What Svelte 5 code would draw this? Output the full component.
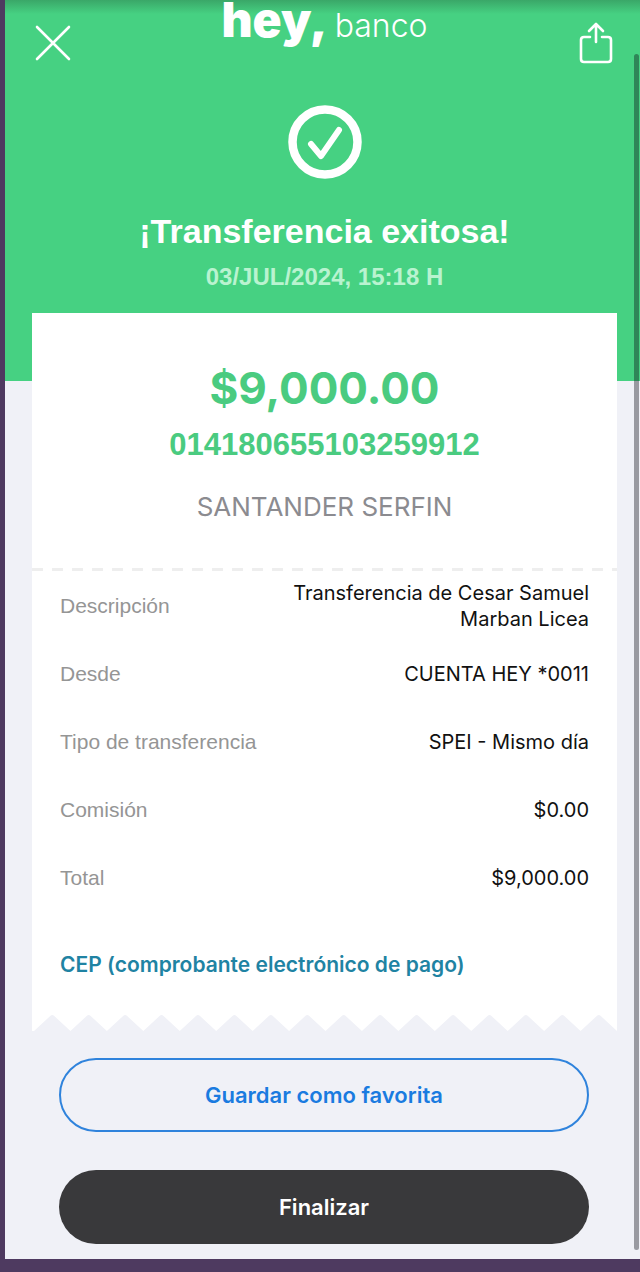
<script lang="ts">
  interface Detail {
    label: string;
    value: string;
  }

  const details: Detail[] = [
    { label: 'Descripción', value: 'Transferencia de Cesar Samuel Marban Licea' },
    { label: 'Desde', value: 'CUENTA HEY *0011' },
    { label: 'Tipo de transferencia', value: 'SPEI - Mismo día' },
    { label: 'Comisión', value: '$0.00' },
    { label: 'Total', value: '$9,000.00' }
  ];

  // torn edge of the receipt
  const teeth = 16;
  const toothWidth = 36;
  const tornEdge =
    'M0 0V16H2' +
    Array.from({ length: teeth }, (_, i) => {
      const x = 2 + i * toothWidth;
      return `L${x + 16} 1Q${x + 18} -1 ${x + 20} 1L${x + toothWidth} 16`;
    }).join('') +
    'V0Z';
</script>

<main class="screen">
  <header class="header">
    <div class="topbar">
      <button class="icon-button" type="button" aria-label="Cerrar">
        <svg width="40" height="40" viewBox="0 0 40 40">
          <path d="M4 4L36 36M36 4L4 36" />
        </svg>
      </button>
      <div class="logo">
        <span class="hey">hey,</span>
        <span class="banco">banco</span>
      </div>
      <button class="icon-button" type="button" aria-label="Compartir">
        <svg width="40" height="44" viewBox="0 0 40 44">
          <path d="M14 16H8Q5 16 5 19V38Q5 41 8 41H32Q35 41 35 38V19Q35 16 32 16H26M20 21V3M13 10L20 3L27 10" />
        </svg>
      </button>
    </div>
    <svg class="check" width="74" height="74" viewBox="0 0 74 74">
      <circle cx="37" cy="37" r="32.5" stroke-width="8.5" />
      <path d="M23 39L33 51L51 25" stroke-width="6" />
    </svg>
    <h1>¡Transferencia exitosa!</h1>
    <p class="date">03/JUL/2024, 15:18 H</p>
  </header>

  <section class="receipt">
    <div class="summary">
      <p class="amount">$9,000.00</p>
      <p class="account">014180655103259912</p>
      <p class="bank">SANTANDER SERFIN</p>
    </div>
    <div class="divider"></div>
    <dl class="details">
      {#each details as detail}
        <div class="row">
          <dt>{detail.label}</dt>
          <dd>{detail.value}</dd>
        </div>
      {/each}
    </dl>
    <a class="cep" href="#cep">CEP (comprobante electrónico de pago)</a>
  </section>
  <svg class="torn" viewBox="0 0 578 16" preserveAspectRatio="none" aria-hidden="true">
    <path d={tornEdge} />
  </svg>

  <div class="actions">
    <button class="button outline" type="button">Guardar como favorita</button>
    <button class="button dark" type="button">Finalizar</button>
  </div>
  <div class="scrollbar"></div>
</main>

<style>
  :global(body) {
    background: #4e3a60;
  }

  .screen {
    position: relative;
    display: flex;
    flex-direction: column;
    margin: 0 0 13px 5px;
    background: #f0f1f7;
    font-family: Inter, 'Liberation Sans', sans-serif;
  }

  .header {
    display: flex;
    flex-direction: column;
    align-items: center;
    padding: 0 23px 89px 27px;
    background: linear-gradient(#3aa768, #46d182 14px);
    color: #fff;
    text-align: center;
  }

  .topbar {
    display: flex;
    justify-content: space-between;
    align-items: flex-end;
    align-self: stretch;
    height: 65px;
    padding: 0 1px;
  }

  .icon-button {
    display: flex;
    align-items: center;
    height: 44px;
    padding: 0;
    border: 0;
    background: none;
    cursor: pointer;
  }

  .icon-button svg {
    fill: none;
    stroke: #fff;
    stroke-width: 2.6;
    stroke-linecap: round;
    stroke-linejoin: round;
  }

  .logo {
    display: flex;
    align-self: flex-start;
    align-items: baseline;
    gap: 7px;
    line-height: 40px;
  }

  .hey {
    font-size: 48px;
    font-weight: 900;
  }

  .banco {
    font-size: 32px;
    font-weight: 300;
  }

  .check {
    margin-top: 40px;
    fill: none;
    stroke: #fff;
    stroke-linecap: round;
    stroke-linejoin: round;
  }

  h1,
  p,
  dl,
  dd {
    margin: 0;
  }

  h1 {
    margin-top: 32px;
    font: bold 34px/40px 'Liberation Sans', Arial, sans-serif;
  }

  .date {
    margin-top: 11px;
    color: #b9f3d0;
    font: bold 24px/30px 'Liberation Sans', Arial, sans-serif;
  }

  .receipt {
    margin: -68px 23px 0 27px;
    background: #fff;
  }

  .summary {
    display: flex;
    flex-direction: column;
    align-items: center;
    padding: 47px 28px 45px;
    color: #4acb80;
  }

  .amount {
    font-size: 44px;
    font-weight: 700;
    line-height: 56px;
  }

  .account {
    margin-top: 11px;
    font: bold 31px/36px 'Liberation Sans', Arial, sans-serif;
  }

  .bank {
    margin-top: 28px;
    color: #8b8b90;
    font-size: 26px;
    line-height: 32px;
  }

  .divider {
    height: 3px;
    background: repeating-linear-gradient(90deg, #eee 0 11px, transparent 11px 20px);
  }

  .details {
    padding: 1px 28px;
  }

  .row {
    display: flex;
    justify-content: space-between;
    align-items: center;
    height: 68px;
    line-height: 26px;
  }

  dt {
    color: #959595;
    font-family: 'Liberation Sans', Arial, sans-serif;
    font-size: 21px;
  }

  dd {
    max-width: 310px;
    color: #111;
    font-size: 20px;
    text-align: right;
  }

  .cep {
    display: block;
    padding: 38px 28px 36px;
    color: #1f83a3;
    font-size: 21px;
    font-weight: 600;
    line-height: 28px;
    text-decoration: none;
  }

  .torn {
    height: 16px;
    margin: 0 23px 0 27px;
    fill: #fff;
  }

  .actions {
    display: flex;
    flex-direction: column;
    gap: 38px;
    padding: 27px 51px 15px 54px;
  }

  .button {
    height: 74px;
    border: 0;
    border-radius: 37px;
    font-family: inherit;
    font-size: 22px;
    font-weight: 600;
    cursor: pointer;
  }

  .outline {
    border: 2px solid #2f83dc;
    background: transparent;
    color: #1a7be0;
  }

  .dark {
    background: #39393b;
    color: #fff;
  }

  .scrollbar {
    position: absolute;
    top: 54px;
    right: 1px;
    bottom: 9px;
    width: 5px;
    border-radius: 3px;
    background: rgba(10, 12, 20, 0.38);
  }
</style>
